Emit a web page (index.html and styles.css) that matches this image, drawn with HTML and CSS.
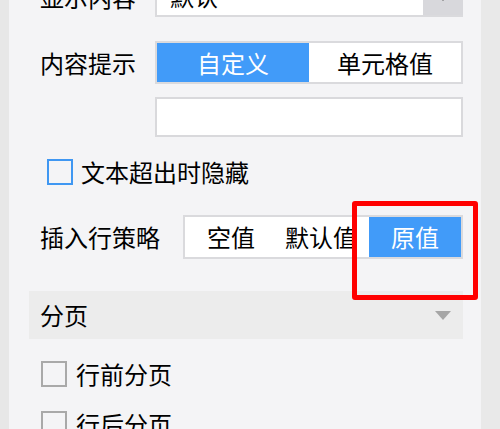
FILE: index.html
```html
<!DOCTYPE html>
<html lang="zh">
<head>
<meta charset="utf-8">
<link rel="stylesheet" href="styles.css">
</head>
<body>
<div class="frame">
  <div class="strip-left"></div>
  <div class="panel">
    <div class="row row-select">
      <span class="label">显示内容</span>
      <div class="select">
        <span class="select-text">默认</span>
        <span class="select-btn"><span class="tri-dark"></span></span>
      </div>
    </div>

    <div class="row row-group1">
      <span class="label">内容提示</span>
      <div class="seg seg-2">
        <span class="seg-item active">自定义</span>
        <span class="seg-item">单元格值</span>
      </div>
    </div>

    <div class="row row-input">
      <span class="label"></span>
      <div class="input"></div>
    </div>

    <div class="row row-check1">
      <span class="box box-blue"></span>
      <span class="check-text">文本超出时隐藏</span>
    </div>

    <div class="row row-group2">
      <span class="label label-wide">插入行策略</span>
      <div class="seg seg-3">
        <span class="seg-item">空值</span>
        <span class="seg-item seg-clip"><span class="clip-inner">默认值</span></span>
        <span class="seg-item active">原值</span>
      </div>
    </div>

    <div class="section">
      <span class="section-title">分页</span>
      <span class="tri-light"></span>
    </div>

    <div class="row row-check2">
      <span class="box box-gray"></span>
      <span class="check-text check-text2">行前分页</span>
    </div>
    <div class="row row-check3">
      <span class="box box-gray"></span>
      <span class="check-text check-text2">行后分页</span>
    </div>

    <div class="highlight"></div>
  </div>
  <div class="strip-right"></div>
</div>
</body>
</html>
```

FILE: styles.css
```css
html, body {
  margin: 0;
  padding: 0;
  width: 500px;
  height: 429px;
  overflow: hidden;
  background: #f4f4f6;
  font-family: "Noto Sans CJK SC", "Noto Sans", sans-serif;
  color: #000;
}

.frame {
  display: flex;
  width: 500px;
  height: 429px;
  overflow: hidden;
}

.strip-left {
  width: 9px;
  flex: none;
  background: #e7e7e7;
}

.strip-right {
  width: 19px;
  flex: none;
  background: #e9e9e9;
}

.panel {
  position: relative;
  flex: 1;
  background: #f4f4f6;
  padding: 0 18px 0 20px;
}

.row {
  display: flex;
  align-items: center;
  font-size: 24px;
  line-height: 1;
}

.label {
  width: 115px;
  flex: none;
  padding-left: 11px;
  white-space: nowrap;
}

.label-wide {
  width: 143px;
}

/* select row */
.row-select {
  height: 41px;
  margin-top: -24px;
}

.select {
  flex: 1;
  height: 41px;
  box-sizing: border-box;
  display: flex;
  background: #fff;
  border-left: 2px solid #dadadd;
  border-bottom: 2px solid #dadadd;
}

.select-text {
  flex: 1;
  display: flex;
  align-items: center;
  padding-left: 13px;
}

.select-btn {
  width: 40px;
  background: #d8d8dc;
  display: flex;
  justify-content: center;
  align-items: flex-end;
  padding-bottom: 14px;
  box-sizing: border-box;
}

.tri-dark {
  width: 0;
  height: 0;
  border-left: 5px solid transparent;
  border-right: 5px solid transparent;
  border-top: 6px solid #555;
}

/* segmented groups */
.seg {
  display: flex;
  border: 2px solid #dadadd;
  background: #fff;
}

.seg-item {
  display: flex;
  align-items: center;
  justify-content: center;
  white-space: nowrap;
  color: #000;
}

.seg-item.active {
  background: #419bf9;
  color: #fff;
}

.row-group1 {
  height: 43px;
  margin-top: 24px;
}

.seg-2 {
  flex: 1;
  height: 39px;
}

.seg-2 .seg-item {
  flex: 1;
}

.row-group2 {
  height: 44px;
  margin-top: 30px;
}

.seg-3 {
  flex: 1;
  height: 40px;
}

.seg-3 .seg-item {
  width: 92px;
  flex: none;
}

.seg-3 .seg-clip {
  justify-content: flex-start;
}

.clip-inner {
  display: block;
  margin-left: 8px;
  width: 68px;
  overflow: hidden;
  white-space: nowrap;
}

/* input */
.row-input {
  height: 40px;
  margin-top: 13px;
}

.input {
  flex: 1;
  height: 40px;
  box-sizing: border-box;
  background: #fff;
  border: 2px solid #d9d9dc;
}

/* checkboxes */
.box {
  width: 26px;
  height: 26px;
  box-sizing: border-box;
  flex: none;
}

.box-blue {
  border: 2px solid #3f97f2;
  margin-left: 18px;
}

.box-gray {
  border: 2px solid #a9a9a9;
  margin-left: 12px;
}

.check-text {
  margin-left: 8px;
  white-space: nowrap;
}

.check-text2 {
  margin-left: 9px;
}

.row-check1 {
  height: 26px;
  margin-top: 22px;
}

.row-check2 {
  height: 26px;
  margin-top: 22px;
}

.row-check3 {
  height: 26px;
  margin-top: 24px;
}

/* section header */
.section {
  margin-top: 32px;
  height: 48px;
  background: #ececec;
  display: flex;
  align-items: center;
  justify-content: space-between;
  padding: 0 12px 0 11px;
  font-size: 24px;
  line-height: 1;
}

.tri-light {
  width: 0;
  height: 0;
  border-left: 8px solid transparent;
  border-right: 8px solid transparent;
  border-top: 9px solid #a6a6a6;
}

/* red annotation overlay */
.highlight {
  position: absolute;
  left: 343px;
  top: 201px;
  width: 126px;
  height: 99px;
  box-sizing: border-box;
  border: 5px solid #ff0000;
  border-radius: 3px;
}
```
